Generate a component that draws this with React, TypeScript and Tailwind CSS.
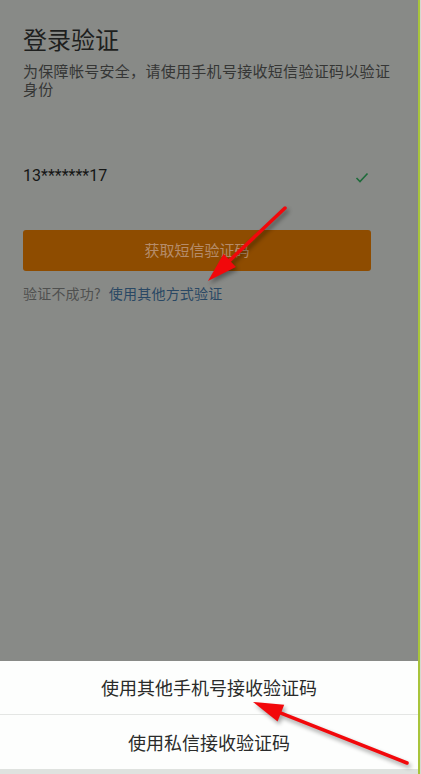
import React from "react";

const font = { fontFamily: '"Noto Sans CJK SC", "Noto Sans", Roboto, sans-serif' };

function Arrow({ x1, y1, x2, y2 }: { x1: number; y1: number; x2: number; y2: number }) {
  const dx = x2 - x1;
  const dy = y2 - y1;
  const len = Math.hypot(dx, dy);
  const ux = dx / len;
  const uy = dy / len;
  const hl = 30;
  const hw = 9;
  const bx = x2 - ux * hl;
  const by = y2 - uy * hl;
  const px = -uy;
  const py = ux;
  const head = `${x2},${y2} ${bx + px * hw},${by + py * hw} ${bx - px * hw},${by - py * hw}`;
  return (
    <g>
      <g opacity="0.35" transform="translate(2,3)" filter="url(#blur)">
        <line x1={x1} y1={y1} x2={bx} y2={by} stroke="#000" strokeWidth="4" strokeLinecap="round" />
        <polygon points={head} fill="#000" />
      </g>
      <line x1={x1} y1={y1} x2={bx + ux * 4} y2={by + uy * 4} stroke="#f2080b" strokeWidth="3.5" strokeLinecap="round" />
      <polygon points={head} fill="#f2080b" />
    </g>
  );
}

export default function App() {
  return (
    <div className="relative flex w-[421px] h-[774px] overflow-hidden bg-[#cfd3cc]" style={font}>
      <div className="flex flex-col w-[418px] h-full">
        <div className="flex-1 bg-[#888a87] pl-[23px] pr-[25px] pt-[25px]">
          <h1 className="text-[24px] leading-[28px] text-[#1e1f1e]">登录验证</h1>
          <p className="mt-[9px] text-[15px] leading-[18px] tracking-[0.3px] text-[#353635]">
            为保障帐号安全，请使用手机号接收短信验证码以验证身份
          </p>
          <div className="mt-[66px] flex items-center justify-between w-[348px] h-[24px]">
            <span className="text-[16px] text-[#151615]" style={{ fontFamily: "Roboto, sans-serif" }}>
              13*******17
            </span>
            <svg width="14" height="11" viewBox="0 0 14 11" className="mr-[2px] mt-[2px]">
              <path d="M1.5 6 L5 9.5 L12.5 1.5" fill="none" stroke="#1e6b3a" strokeWidth="1.6" />
            </svg>
          </div>
          <div className="mt-[42px] w-[348px] h-[41px] rounded-[3px] bg-[#8e4c00] flex items-center justify-center">
            <span className="text-[15px] text-[#b58c6b]">获取短信验证码</span>
          </div>
          <div className="mt-[13px] text-[14px] leading-[18px] tracking-[0.2px]">
            <span className="text-[#4f504f]">验证不成功?</span>
            <span className="ml-[8px] text-[#2a4864]">使用其他方式验证</span>
          </div>
        </div>
        <div className="bg-[#fdfefd]">
          <div className="h-[54px] flex items-center justify-center border-b border-[#e4e6e4]">
            <span className="text-[18px] text-[#2a2b2a]">使用其他手机号接收验证码</span>
          </div>
          <div className="h-[54px] flex items-center justify-center">
            <span className="text-[18px] text-[#2a2b2a]">使用私信接收验证码</span>
          </div>
        </div>
        <div className="h-[5px] bg-[#dfe2df]" />
      </div>
      <div className="w-[2px] h-full bg-[#a8c43a]" />
      <div className="w-[1px] h-full bg-[#d6d9d2]" />
      <svg className="absolute inset-0 pointer-events-none" width="421" height="774">
        <defs>
          <filter id="blur" x="-20%" y="-20%" width="140%" height="140%">
            <feGaussianBlur stdDeviation="2" />
          </filter>
        </defs>
        <Arrow x1={285} y1={208} x2={208} y2={281} />
        <Arrow x1={407} y1={763} x2={253} y2={702} />
      </svg>
    </div>
  );
}
